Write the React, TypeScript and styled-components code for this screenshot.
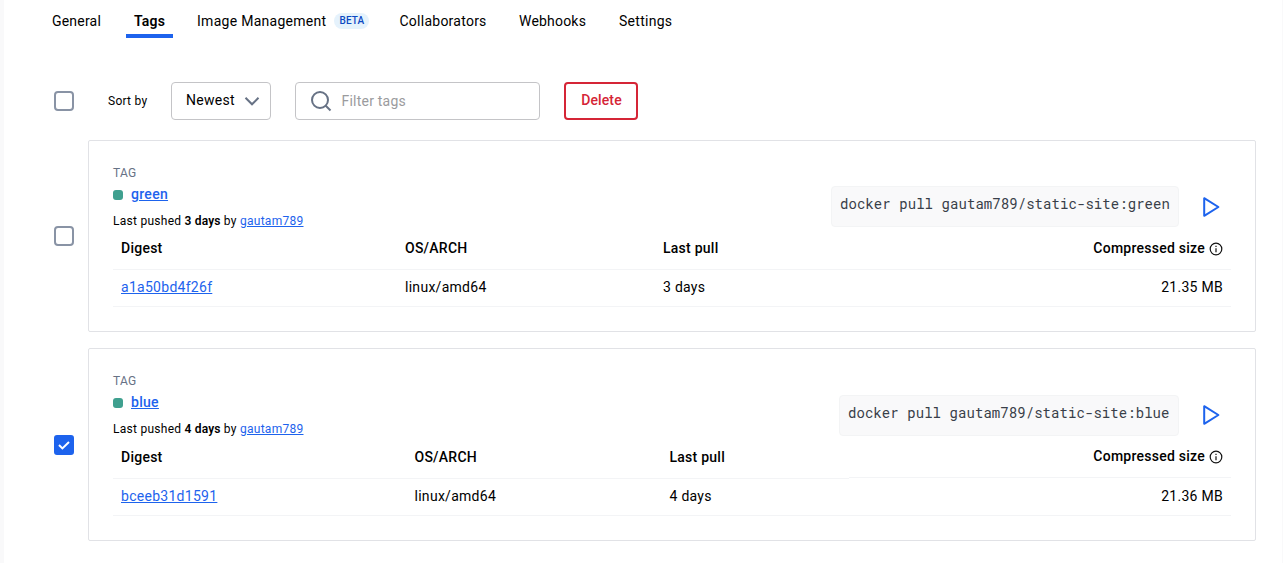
import React from "react";
import styled, { createGlobalStyle } from "styled-components";

const GlobalStyle = createGlobalStyle`
  *, *::before, *::after { box-sizing: border-box; }
  body {
    margin: 0;
    background: #fff;
    color: #000;
    font-family: Roboto, "Liberation Sans", sans-serif;
    font-size: 14px;
    letter-spacing: 0.15px;
    overflow: hidden;
  }
`;

const Page = styled.main`
  height: 563px;
  border-left: 4px solid #f9f9fa;
  border-right: 1px solid #f9f9fa;
  padding: 0 26px 0 40px;
`;

const TabList = styled.nav`
  display: flex;
  height: 38px;
  gap: 16px;
`;

const Tab = styled.a<{ $active?: boolean; $width: number; $tracking?: number }>`
  display: flex;
  align-items: center;
  gap: 8px;
  width: ${(p) => p.$width}px;
  padding: 8px 0 0 8px;
  border-bottom: 4px solid ${(p) => (p.$active ? "#1d63ed" : "transparent")};
  font-weight: ${(p) => (p.$active ? 600 : 400)};
  letter-spacing: ${(p) => p.$tracking ?? 0.2}px;
  white-space: nowrap;
`;

const Badge = styled.span`
  height: 16px;
  padding: 0 5px;
  border-radius: 8px;
  background: #e5f2fc;
  color: #0c49c2;
  font-size: 10px;
  font-weight: 500;
  line-height: 16px;
  letter-spacing: 0.15px;
`;

const Toolbar = styled.div`
  display: flex;
  align-items: center;
  height: 38px;
  margin-top: 44px;
  padding-left: 10px;
`;

const CheckBox = styled.span<{ $checked?: boolean }>`
  display: flex;
  align-items: center;
  justify-content: center;
  flex: none;
  width: 20px;
  height: 20px;
  border: 2px solid ${(p) => (p.$checked ? "#1d63ed" : "#8993a5")};
  border-radius: ${(p) => (p.$checked ? 3 : 4)}px;
  background: ${(p) => (p.$checked ? "#1d63ed" : "#fff")};
`;

const SortLabel = styled.span`
  width: 63px;
  margin-left: 34px;
  font-size: 12px;
  letter-spacing: 0.25px;
`;

const Select = styled.div`
  display: flex;
  align-items: center;
  justify-content: space-between;
  width: 100px;
  height: 38px;
  padding: 0 10px 2px 14px;
  border: 1px solid #c4c4c7;
  border-radius: 4px;
  letter-spacing: 0.3px;

  svg { position: relative; top: 1px; }
`;

const Search = styled.div`
  display: flex;
  align-items: center;
  width: 245px;
  height: 38px;
  margin-left: 24px;
  padding-left: 14px;
  gap: 9.5px;
  border: 1px solid #c4c4c7;
  border-radius: 4px;
  color: #9b9b9e;
  letter-spacing: 0.22px;
`;

const DeleteButton = styled.button`
  width: 74px;
  height: 38px;
  margin-left: 24px;
  padding: 0 0 2px 1px;
  border: 2px solid #d52536;
  border-radius: 4px;
  background: #fff;
  color: #d52536;
  font: 500 14px Roboto, sans-serif;
  letter-spacing: 0.1px;
`;

const List = styled.div`
  display: flex;
  flex-direction: column;
  gap: 16px;
  margin-top: 20px;
`;

const Item = styled.div`
  display: flex;
  align-items: center;
  gap: 14px;
  padding-left: 10px;
`;

const Card = styled.section<{ $height: number }>`
  flex: 1;
  height: ${(p) => p.$height}px;
  padding: 24px 24px 0;
  border: 1px solid #e1e2e6;
  border-radius: 2px;
`;

const CardHead = styled.div<{ $height: number }>`
  display: flex;
  justify-content: space-between;
  height: ${(p) => p.$height}px;
`;

const Kicker = styled.div`
  height: 16px;
  color: #677285;
  font-size: 12px;
  line-height: 16px;
  letter-spacing: 0.3px;
`;

const TagLine = styled.div`
  display: flex;
  align-items: center;
  gap: 8px;
  height: 26px;
  line-height: 24px;
  padding-bottom: 1px;
`;

const StatusDot = styled.i`
  width: 10px;
  height: 10px;
  margin-top: 2px;
  border-radius: 3px;
  background: #3fa08f;
`;

const Link = styled.a<{ $strong?: boolean }>`
  color: #1d63ed;
  font-weight: ${(p) => (p.$strong ? 500 : 400)};
  letter-spacing: ${(p) => (p.$strong ? "0.3px" : "inherit")};
  text-decoration: underline;
`;

const Pushed = styled.div`
  height: 28px;
  font-size: 12px;
  line-height: 28px;
  letter-spacing: 0.27px;

  b { font-weight: 600; letter-spacing: 0.15px; }
`;

const Actions = styled.div`
  display: flex;
  align-items: flex-start;
  gap: 20px;
  padding: 21px 8px 0 0;
`;

const Command = styled.code<{ $width: number; $drop: number }>`
  width: ${(p) => p.$width}px;
  height: 41px;
  margin-top: ${(p) => p.$drop}px;
  padding-left: 8px;
  border: 1px solid #f3f4f5;
  border-radius: 4px;
  background: #f9f9fa;
  color: #393f49;
  font-family: "Roboto Mono", "DejaVu Sans Mono", monospace;
  font-size: 14px;
  line-height: 34px;
  letter-spacing: 0.06px;
  white-space: nowrap;
`;

const PlayIcon = styled.svg`
  display: block;
  margin-top: 10px;
`;

const Table = styled.div<{ $columns: string }>`
  display: grid;
  grid-template-columns: ${(p) => p.$columns};
  grid-template-rows: 42px 37px;
`;

const Cell = styled.div<{ $head?: boolean; $end?: boolean; $lift?: boolean }>`
  display: flex;
  align-items: center;
  justify-content: ${(p) => (p.$end ? "flex-end" : "flex-start")};
  gap: 4px;
  padding: 0 8px 2px;
  margin-top: ${(p) => (p.$lift ? -1 : 0)}px;
  margin-bottom: ${(p) => (p.$lift ? 1 : 0)}px;
  border-bottom: 1px solid #f3f4f6;
  font-weight: ${(p) => (p.$head ? 500 : 400)};
  letter-spacing: ${(p) => (p.$head ? 0.25 : 0.28)}px;

  svg { position: relative; top: 1px; }
`;

const InfoIcon = () => (
  <svg width="14" height="14" viewBox="0 0 14 14" fill="none">
    <circle cx="7" cy="7" r="5.8" stroke="#111" strokeWidth="1.2" />
    <path d="M7 6.2v4M7 3.8v1.3" stroke="#111" strokeWidth="1.2" />
  </svg>
);

interface Tag {
  name: string;
  age: string;
  digest: string;
  size: string;
  columns: string;
  commandWidth: number;
  extra: number;
  checked?: boolean;
}

const tags: Tag[] = [
  { name: "green", age: "3 days", digest: "a1a50bd4f26f", size: "21.35 MB", columns: "284px 258px 1fr 400px", commandWidth: 348, extra: 0 },
  { name: "blue", age: "4 days", digest: "bceeb31d1591", size: "21.36 MB", columns: "293.5px 255px 1fr 382px", commandWidth: 340, extra: 1, checked: true },
];

const TagItem = ({ tag }: { tag: Tag }) => (
  <Item>
    <CheckBox $checked={tag.checked}>
      {tag.checked && (
        <svg width="14" height="14" viewBox="0 0 14 14" fill="none">
          <path d="M2 7l3.4 3.4L12 4" stroke="#fff" strokeWidth="2" />
        </svg>
      )}
    </CheckBox>
    <Card $height={192 + tag.extra}>
      <CardHead $height={63 + tag.extra}>
        <div>
          <Kicker>TAG</Kicker>
          <TagLine>
            <StatusDot />
            <Link $strong>{tag.name}</Link>
          </TagLine>
          <Pushed>
            Last pushed <b>{tag.age}</b> by <Link>gautam789</Link>
          </Pushed>
        </div>
        <Actions>
          <Command $width={tag.commandWidth} $drop={tag.extra}>
            docker pull gautam789/static-site:{tag.name}
          </Command>
          <PlayIcon width="24" height="22" viewBox="0 0 24 22" fill="none">
            <path d="M5.2 2.2v17.6L19.4 11z" stroke="#1d63ed" strokeWidth="2" strokeLinejoin="round" />
          </PlayIcon>
        </Actions>
      </CardHead>
      <Table $columns={tag.columns}>
        <Cell $head>Digest</Cell>
        <Cell $head>OS/ARCH</Cell>
        <Cell $head>Last pull</Cell>
        <Cell $head $end $lift={tag.extra > 0}>
          Compressed size
          <InfoIcon />
        </Cell>
        <Cell><Link>{tag.digest}</Link></Cell>
        <Cell>linux/amd64</Cell>
        <Cell>{tag.age}</Cell>
        <Cell $end>{tag.size}</Cell>
      </Table>
    </Card>
  </Item>
);

export default function App() {
  return (
    <>
      <GlobalStyle />
      <Page>
        <TabList>
          <Tab $width={66}>General</Tab>
          <Tab $width={47} $active>Tags</Tab>
          <Tab $width={186.5} $tracking={0.28}>Image Management <Badge>BETA</Badge></Tab>
          <Tab $width={103.5} $tracking={0.25}>Collaborators</Tab>
          <Tab $width={84}>Webhooks</Tab>
          <Tab $width={70} $tracking={0.28}>Settings</Tab>
        </TabList>
        <Toolbar>
          <CheckBox />
          <SortLabel>Sort by</SortLabel>
          <Select>
            Newest
            <svg width="16" height="16" viewBox="0 0 16 16" fill="none">
              <path d="M1.5 4.8L8 11.3l6.5-6.5" stroke="#677285" strokeWidth="2" />
            </svg>
          </Select>
          <Search>
            <svg width="22" height="22" viewBox="0 0 22 22" fill="none">
              <circle cx="10" cy="10" r="8" stroke="#677285" strokeWidth="2" />
              <path d="M15.5 15.5l5 5" stroke="#677285" strokeWidth="2" />
            </svg>
            Filter tags
          </Search>
          <DeleteButton>Delete</DeleteButton>
        </Toolbar>
        <List>
          {tags.map((tag) => (
            <TagItem key={tag.name} tag={tag} />
          ))}
        </List>
      </Page>
    </>
  );
}
